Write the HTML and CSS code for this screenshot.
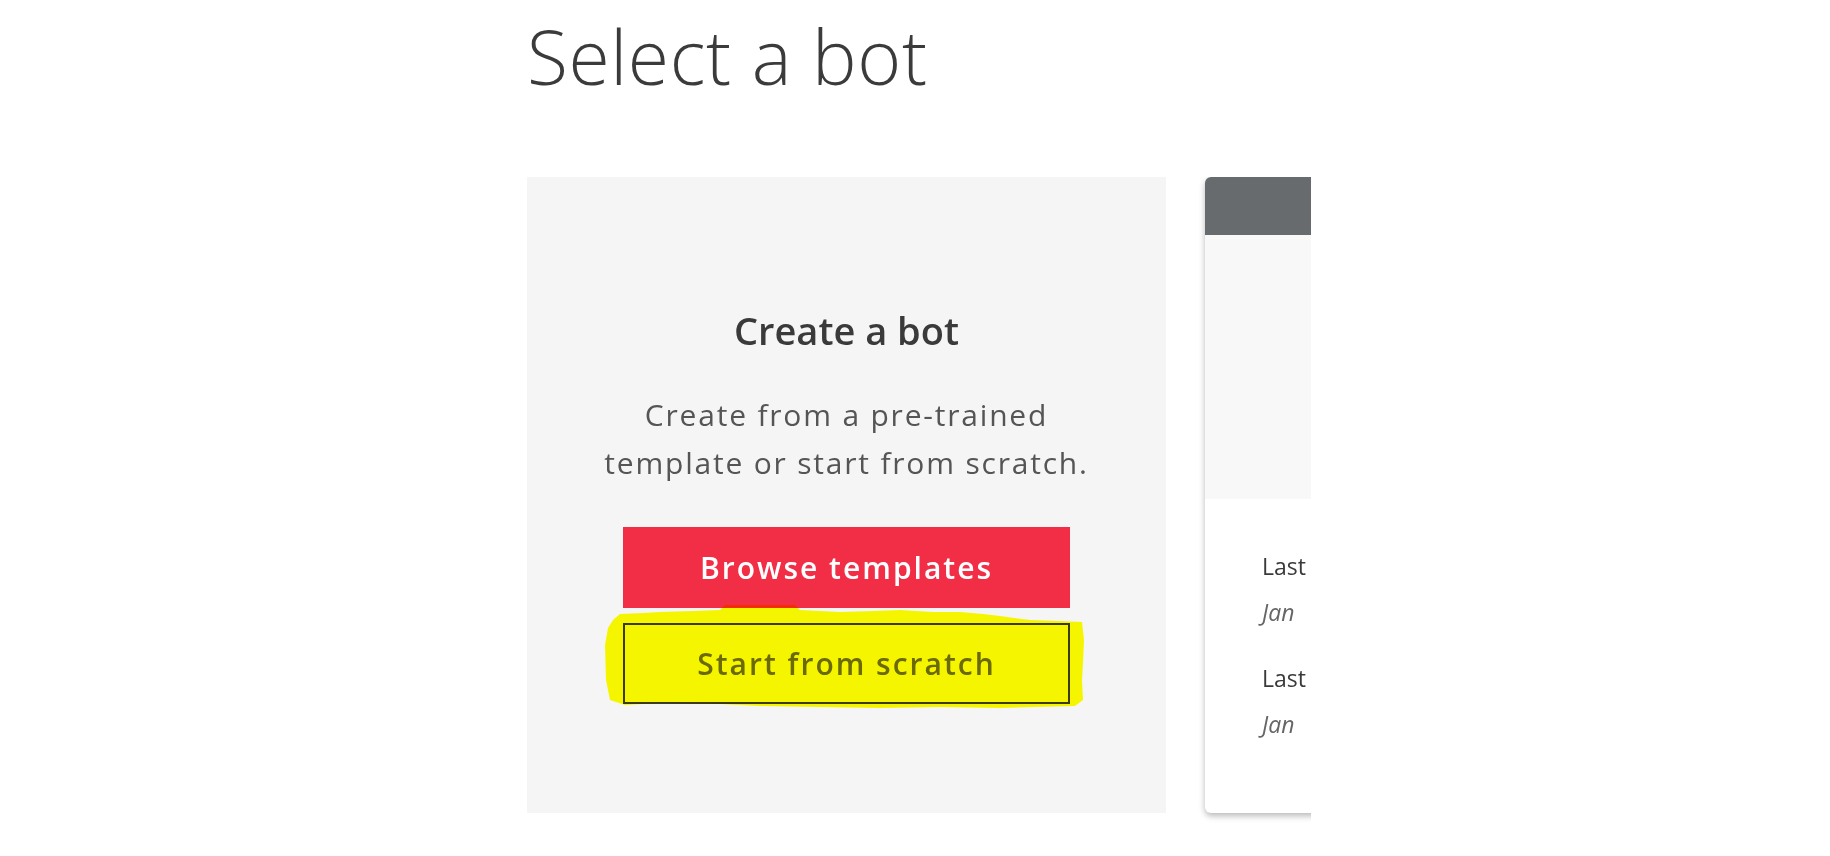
FILE: index.html
```html
<!DOCTYPE html>
<html lang="en">
<head>
<meta charset="utf-8">
<title>Select a bot</title>
<link rel="stylesheet" href="styles.css">
</head>
<body>
<main class="page">
  <h1 class="title">Select a bot</h1>
  <div class="row">
    <section class="create-card">
      <h2 class="create-title">Create a bot</h2>
      <p class="create-text">Create from a pre-trained<br>template or start from scratch.</p>
      <button class="btn btn-primary" type="button">Browse templates</button>
      <button class="btn btn-outline" type="button">Start from scratch</button>
      <svg class="highlight" width="482" height="108" viewBox="0 0 482 108" aria-hidden="true">
        <path d="M10 17 L17 11 L40 10 L57 9 L90 8 L117 7 L122 2 L192 2 L197 7 L237 9 L270 8 L297 7 L330 9 L357 9 L380 11 L397 13 L427 17 L455 18 L479 19 L481 37 L480 60 L479 77 L480 97 L472 103 L430 104 L397 105 L337 104 L277 105 L217 104 L157 103 L117 101 L57 100 L22 102 L7 97 L3 77 L2 42 L5 25 Z" />
      </svg>
    </section>
    <article class="bot-card">
      <div class="bot-header"></div>
      <div class="bot-image"></div>
      <div class="bot-meta">
        <div class="meta-group">
          <div class="meta-label">Last</div>
          <div class="meta-value">Jan</div>
        </div>
        <div class="meta-group">
          <div class="meta-label">Last</div>
          <div class="meta-value">Jan</div>
        </div>
      </div>
    </article>
  </div>
</main>
</body>
</html>
```
FILE: styles.css
```css
* {
  box-sizing: border-box;
}

html, body {
  margin: 0;
  padding: 0;
  background: #ffffff;
}

body {
  font-family: "Open Sans", "Liberation Sans", sans-serif;
  color: #333333;
  width: 1830px;
  height: 856px;
  overflow: hidden;
}

.page {
  padding-left: 527px;
}

.title {
  margin: 0;
  padding-top: 12px;
  font-size: 75px;
  line-height: 88.8px;
  font-weight: 300;
  color: #3b3b3b;
  letter-spacing: 0.6px;
}

.row {
  margin-top: 76px;
  width: 784px;
  display: flex;
  gap: 39px;
  overflow: hidden;
  padding-bottom: 14px;
}

.create-card {
  position: relative;
  flex: 0 0 639px;
  height: 636px;
  background: #f5f5f5;
  display: flex;
  flex-direction: column;
  align-items: center;
}

.create-title {
  margin: 130px 0 0;
  font-size: 38px;
  line-height: 46px;
  font-weight: 600;
  color: #3a3a3a;
}

.create-text {
  margin: 38px 0 0;
  font-size: 30px;
  line-height: 48px;
  font-weight: 400;
  letter-spacing: 1.8px;
  color: #555555;
  text-align: center;
}

.btn {
  width: 447px;
  height: 81px;
  display: flex;
  align-items: center;
  justify-content: center;
  font-family: "Open Sans", "Liberation Sans", sans-serif;
  font-size: 30px;
  font-weight: 600;
  letter-spacing: 2px;
  border-radius: 0;
  padding: 0;
  cursor: pointer;
}

.btn-primary {
  margin-top: 40px;
  background: #f22d46;
  color: #ffffff;
  border: none;
}

.btn-outline {
  margin-top: 15px;
  background: transparent;
  color: #6a6a6a;
  border: 2px solid #3c3c3c;
}

.highlight {
  position: absolute;
  left: 76px;
  top: 426px;
  fill: #ffff00;
  mix-blend-mode: multiply;
  pointer-events: none;
}

.bot-card {
  flex: 0 0 639px;
  height: 636px;
  background: #ffffff;
  border-radius: 6px;
  box-shadow: 0 3px 6px rgba(0, 0, 0, 0.28);
  overflow: hidden;
  display: flex;
  flex-direction: column;
}

.bot-header {
  height: 58px;
  background: #676b6e;
}

.bot-image {
  height: 264px;
  background: #f8f8f8;
}

.bot-meta {
  padding: 44px 0 0 57px;
  display: flex;
  flex-direction: column;
  gap: 20px;
  white-space: nowrap;
}

.meta-label {
  font-size: 23px;
  line-height: 46px;
  color: #3a3a3a;
}

.meta-value {
  font-size: 23px;
  line-height: 46px;
  font-style: italic;
  color: #666666;
}
```
